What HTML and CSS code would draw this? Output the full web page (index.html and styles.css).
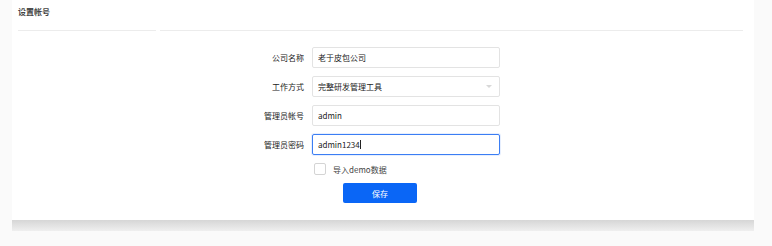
FILE: index.html
```html
<!DOCTYPE html>
<html lang="zh-CN">
<head>
    <meta charset="UTF-8">
    <title>设置帐号</title>
    <link rel="stylesheet" href="styles.css">
</head>
<body>
    <div class="page">
        <div class="panel">
            <div class="panel-head">
                <h2 class="panel-title">设置帐号</h2>
                <div class="head-rule">
                    <span class="rule-a"></span>
                    <span class="rule-b"></span>
                </div>
            </div>

            <form class="setup-form">
                <div class="form-row">
                    <label class="form-label">公司名称</label>
                    <input type="text" class="form-input" value="老于皮包公司">
                </div>
                <div class="form-row">
                    <label class="form-label">工作方式</label>
                    <div class="form-input form-select">
                        <span>完整研发管理工具</span>
                        <span class="select-arrow"></span>
                    </div>
                </div>
                <div class="form-row">
                    <label class="form-label">管理员帐号</label>
                    <input type="text" class="form-input" value="admin">
                </div>
                <div class="form-row">
                    <label class="form-label">管理员密码</label>
                    <div class="form-input focused">admin1234<span class="caret"></span></div>
                </div>
                <div class="check-row">
                    <span class="checkbox"></span>
                    <span class="check-text">导入demo数据</span>
                </div>
                <div class="btn-row">
                    <button type="button" class="btn-save">保存</button>
                </div>
            </form>
        </div>
        <div class="panel-shadow"></div>
    </div>
</body>
</html>
```

FILE: styles.css
```css
body {
    margin: 0;
    background: #fafafa;
    font-family: "Noto Sans CJK SC", "Noto Sans", sans-serif;
    color: #333;
}
.page {
    width: 742px;
    margin-left: 12px;
}
.panel {
    background: #ffffff;
    height: 220px;
    box-sizing: border-box;
}
.panel-head {
    padding: 0 11px 0 6px;
}
.panel-title {
    margin: 0;
    padding-top: 6px;
    height: 30px;
    box-sizing: border-box;
    font-size: 8px;
    line-height: 12px;
    font-weight: bold;
    color: #444;
}
.head-rule {
    display: flex;
    gap: 4px;
}
.rule-a,
.rule-b {
    height: 1px;
    background: #ececec;
}
.rule-a {
    width: 138px;
}
.rule-b {
    flex: 1;
}
.setup-form {
    padding: 16px 0 0 222px;
    display: flex;
    flex-direction: column;
    gap: 8px;
}
.form-row {
    display: flex;
    align-items: center;
    gap: 8px;
}
.form-label {
    width: 70px;
    text-align: right;
    font-size: 8px;
    color: #222;
}
.form-input {
    width: 188px;
    height: 21px;
    box-sizing: border-box;
    border: 1px solid #e3e3e3;
    border-radius: 2px;
    padding: 0 5px;
    font-family: inherit;
    font-size: 8px;
    line-height: 19px;
    color: #222;
    outline: none;
    background: #fff;
}
.form-select {
    display: flex;
    align-items: center;
    justify-content: space-between;
}
.select-arrow {
    width: 0;
    height: 0;
    border-left: 3px solid transparent;
    border-right: 3px solid transparent;
    border-top: 3px solid #d8d8d8;
    margin-right: 2px;
}
.focused {
    border-color: #3b7ef4;
    box-shadow: 0 0 0 1px rgba(59, 126, 244, 0.12);
}
.caret {
    display: inline-block;
    width: 1px;
    height: 9px;
    background: #222;
    vertical-align: -1px;
}
.check-row {
    display: flex;
    align-items: center;
    gap: 7px;
    padding-left: 80px;
    height: 12px;
}
.checkbox {
    width: 10px;
    height: 10px;
    border: 1px solid #d4d4d4;
    border-radius: 2px;
}
.check-text {
    font-size: 8px;
    color: #444;
}
.btn-row {
    display: flex;
    padding-left: 109px;
}
.btn-save {
    width: 74px;
    height: 20px;
    border: none;
    border-radius: 2px;
    background: #0a66f6;
    color: #fff;
    font-family: inherit;
    font-size: 8px;
    cursor: pointer;
}
.panel-shadow {
    height: 11px;
    background: linear-gradient(#d6d6d6, #efefef);
}
```
